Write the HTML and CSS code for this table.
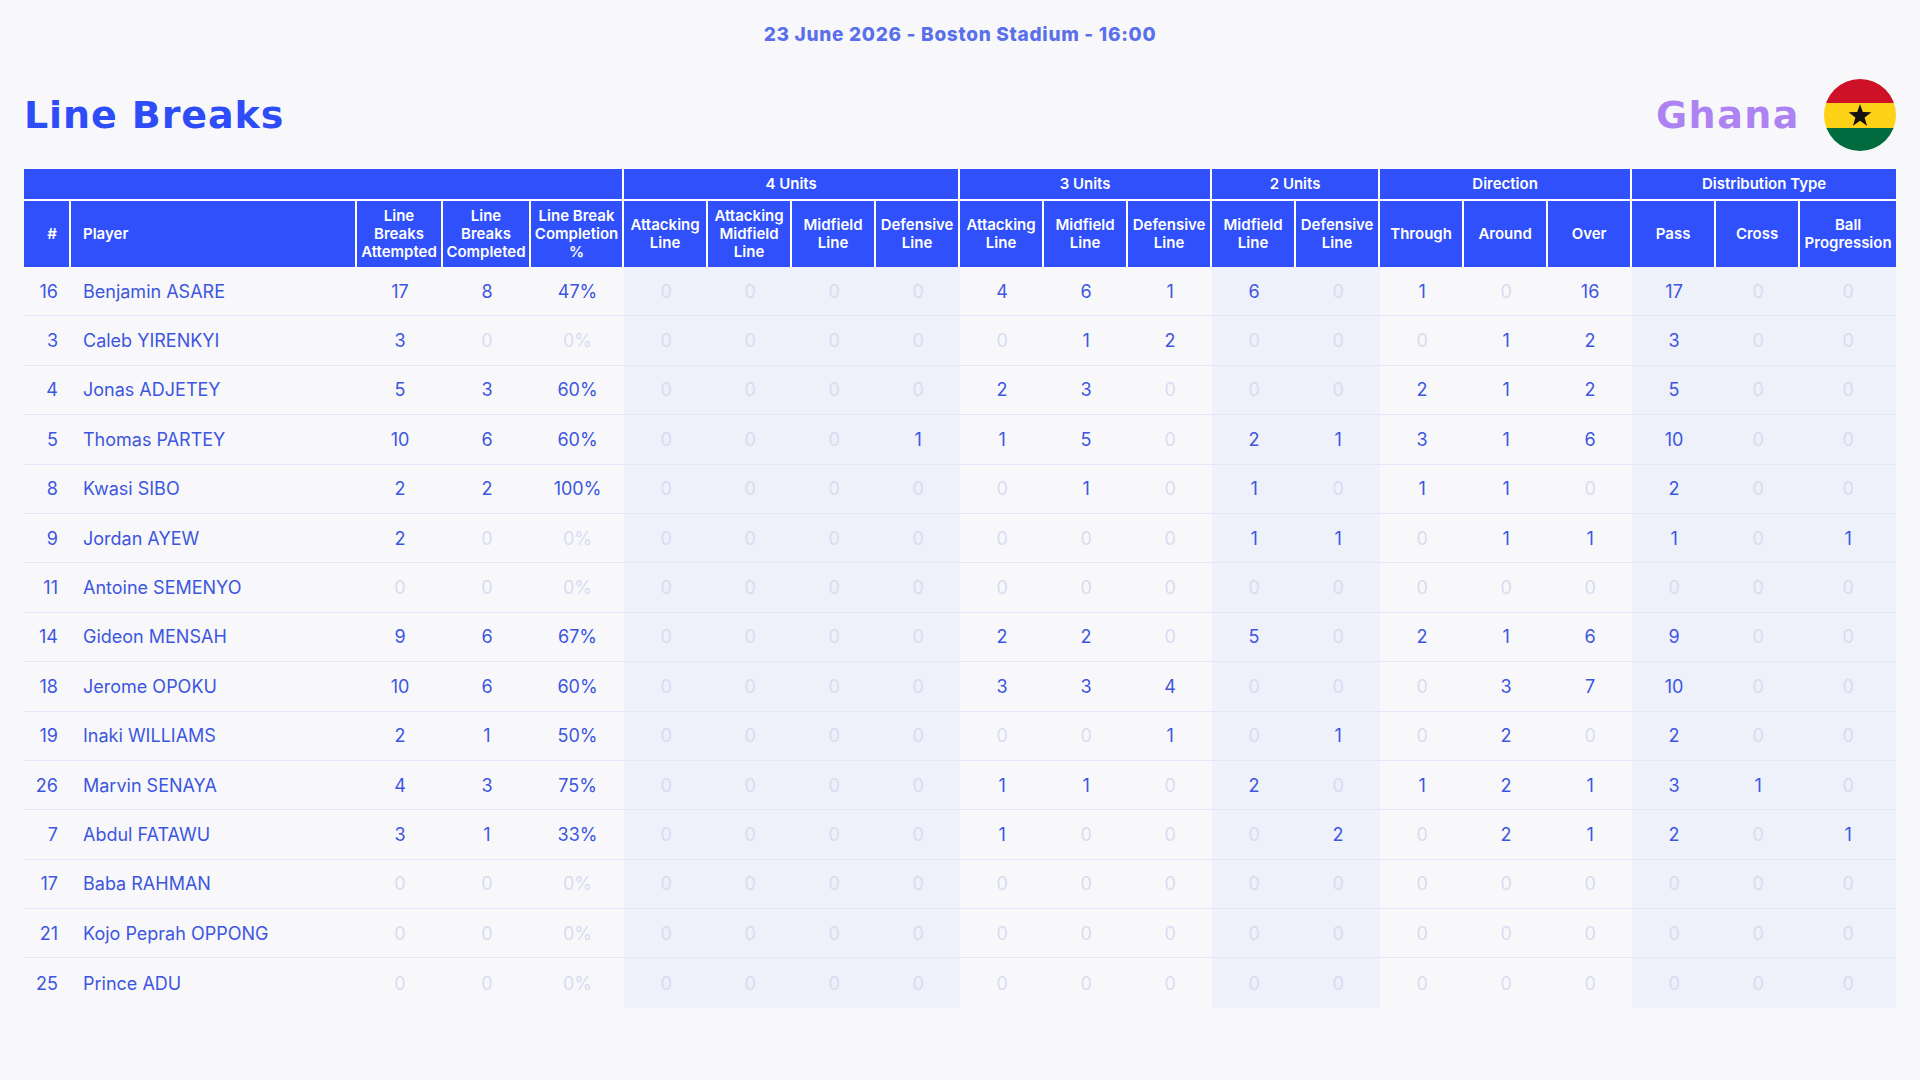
FILE: index.html
```html
<!DOCTYPE html>
<html lang="en">
<head>
<meta charset="utf-8">
<title>Line Breaks - Ghana</title>
<link rel="stylesheet" href="styles.css">
</head>
<body>
<div class="page">
  <div class="date">23 June 2026 - Boston Stadium - 16:00</div>
  <div class="top">
    <h1 class="title">Line Breaks</h1>
    <div class="team">
      <span class="team-name">Ghana</span>
      <svg class="flag" width="72" height="72" viewBox="0 0 72 72">
        <defs><clipPath id="c"><circle cx="36" cy="36" r="36"/></clipPath></defs>
        <g clip-path="url(#c)">
          <rect x="0" y="0" width="72" height="24" fill="#ce1126"/>
          <rect x="0" y="24" width="72" height="25" fill="#fcd116"/>
          <rect x="0" y="49" width="72" height="23" fill="#006b3f"/>
        </g>
        <polygon fill="#111" points="36,25 38.82,33.12 47.41,33.29 40.57,38.48 43.05,46.71 36,41.8 28.95,46.71 31.43,38.48 24.59,33.29 33.18,33.12"/>
      </svg>
    </div>
  </div>
  <table class="stats">
    <colgroup>
      <col class="c-num"><col class="c-player"><col class="c-att"><col class="c-comp"><col class="c-pct">
      <col class="c-stat tint"><col class="c-stat tint"><col class="c-stat tint"><col class="c-stat tint">
      <col class="c-stat"><col class="c-stat"><col class="c-stat">
      <col class="c-stat tint"><col class="c-stat tint">
      <col class="c-stat"><col class="c-stat"><col class="c-stat">
      <col class="c-stat tint"><col class="c-stat tint"><col class="c-last tint">
    </colgroup>
    <thead>
      <tr class="groups">
        <th colspan="5"></th>
        <th colspan="4">4 Units</th>
        <th colspan="3">3 Units</th>
        <th colspan="2">2 Units</th>
        <th colspan="3">Direction</th>
        <th colspan="3" class="last">Distribution Type</th>
      </tr>
      <tr class="cols">
        <th class="num">#</th>
        <th class="player">Player</th>
        <th>Line<br>Breaks<br>Attempted</th>
        <th>Line<br>Breaks<br>Completed</th>
        <th>Line Break<br>Completion<br>%</th>
        <th>Attacking<br>Line</th>
        <th>Attacking<br>Midfield<br>Line</th>
        <th>Midfield<br>Line</th>
        <th>Defensive<br>Line</th>
        <th>Attacking<br>Line</th>
        <th>Midfield<br>Line</th>
        <th>Defensive<br>Line</th>
        <th>Midfield<br>Line</th>
        <th>Defensive<br>Line</th>
        <th>Through</th>
        <th>Around</th>
        <th>Over</th>
        <th>Pass</th>
        <th>Cross</th>
        <th class="last">Ball<br>Progression</th>
      </tr>
    </thead>
    <tbody>
      <tr><td class="num">16</td><td class="player">Benjamin ASARE</td><td>17</td><td>8</td><td>47%</td><td class="z">0</td><td class="z">0</td><td class="z">0</td><td class="z">0</td><td>4</td><td>6</td><td>1</td><td>6</td><td class="z">0</td><td>1</td><td class="z">0</td><td>16</td><td>17</td><td class="z">0</td><td class="z">0</td></tr>
      <tr><td class="num">3</td><td class="player">Caleb YIRENKYI</td><td>3</td><td class="z">0</td><td class="z">0%</td><td class="z">0</td><td class="z">0</td><td class="z">0</td><td class="z">0</td><td class="z">0</td><td>1</td><td>2</td><td class="z">0</td><td class="z">0</td><td class="z">0</td><td>1</td><td>2</td><td>3</td><td class="z">0</td><td class="z">0</td></tr>
      <tr><td class="num">4</td><td class="player">Jonas ADJETEY</td><td>5</td><td>3</td><td>60%</td><td class="z">0</td><td class="z">0</td><td class="z">0</td><td class="z">0</td><td>2</td><td>3</td><td class="z">0</td><td class="z">0</td><td class="z">0</td><td>2</td><td>1</td><td>2</td><td>5</td><td class="z">0</td><td class="z">0</td></tr>
      <tr><td class="num">5</td><td class="player">Thomas PARTEY</td><td>10</td><td>6</td><td>60%</td><td class="z">0</td><td class="z">0</td><td class="z">0</td><td>1</td><td>1</td><td>5</td><td class="z">0</td><td>2</td><td>1</td><td>3</td><td>1</td><td>6</td><td>10</td><td class="z">0</td><td class="z">0</td></tr>
      <tr><td class="num">8</td><td class="player">Kwasi SIBO</td><td>2</td><td>2</td><td>100%</td><td class="z">0</td><td class="z">0</td><td class="z">0</td><td class="z">0</td><td class="z">0</td><td>1</td><td class="z">0</td><td>1</td><td class="z">0</td><td>1</td><td>1</td><td class="z">0</td><td>2</td><td class="z">0</td><td class="z">0</td></tr>
      <tr><td class="num">9</td><td class="player">Jordan AYEW</td><td>2</td><td class="z">0</td><td class="z">0%</td><td class="z">0</td><td class="z">0</td><td class="z">0</td><td class="z">0</td><td class="z">0</td><td class="z">0</td><td class="z">0</td><td>1</td><td>1</td><td class="z">0</td><td>1</td><td>1</td><td>1</td><td class="z">0</td><td>1</td></tr>
      <tr><td class="num">11</td><td class="player">Antoine SEMENYO</td><td class="z">0</td><td class="z">0</td><td class="z">0%</td><td class="z">0</td><td class="z">0</td><td class="z">0</td><td class="z">0</td><td class="z">0</td><td class="z">0</td><td class="z">0</td><td class="z">0</td><td class="z">0</td><td class="z">0</td><td class="z">0</td><td class="z">0</td><td class="z">0</td><td class="z">0</td><td class="z">0</td></tr>
      <tr><td class="num">14</td><td class="player">Gideon MENSAH</td><td>9</td><td>6</td><td>67%</td><td class="z">0</td><td class="z">0</td><td class="z">0</td><td class="z">0</td><td>2</td><td>2</td><td class="z">0</td><td>5</td><td class="z">0</td><td>2</td><td>1</td><td>6</td><td>9</td><td class="z">0</td><td class="z">0</td></tr>
      <tr><td class="num">18</td><td class="player">Jerome OPOKU</td><td>10</td><td>6</td><td>60%</td><td class="z">0</td><td class="z">0</td><td class="z">0</td><td class="z">0</td><td>3</td><td>3</td><td>4</td><td class="z">0</td><td class="z">0</td><td class="z">0</td><td>3</td><td>7</td><td>10</td><td class="z">0</td><td class="z">0</td></tr>
      <tr><td class="num">19</td><td class="player">Inaki WILLIAMS</td><td>2</td><td>1</td><td>50%</td><td class="z">0</td><td class="z">0</td><td class="z">0</td><td class="z">0</td><td class="z">0</td><td class="z">0</td><td>1</td><td class="z">0</td><td>1</td><td class="z">0</td><td>2</td><td class="z">0</td><td>2</td><td class="z">0</td><td class="z">0</td></tr>
      <tr><td class="num">26</td><td class="player">Marvin SENAYA</td><td>4</td><td>3</td><td>75%</td><td class="z">0</td><td class="z">0</td><td class="z">0</td><td class="z">0</td><td>1</td><td>1</td><td class="z">0</td><td>2</td><td class="z">0</td><td>1</td><td>2</td><td>1</td><td>3</td><td>1</td><td class="z">0</td></tr>
      <tr><td class="num">7</td><td class="player">Abdul FATAWU</td><td>3</td><td>1</td><td>33%</td><td class="z">0</td><td class="z">0</td><td class="z">0</td><td class="z">0</td><td>1</td><td class="z">0</td><td class="z">0</td><td class="z">0</td><td>2</td><td class="z">0</td><td>2</td><td>1</td><td>2</td><td class="z">0</td><td>1</td></tr>
      <tr><td class="num">17</td><td class="player">Baba RAHMAN</td><td class="z">0</td><td class="z">0</td><td class="z">0%</td><td class="z">0</td><td class="z">0</td><td class="z">0</td><td class="z">0</td><td class="z">0</td><td class="z">0</td><td class="z">0</td><td class="z">0</td><td class="z">0</td><td class="z">0</td><td class="z">0</td><td class="z">0</td><td class="z">0</td><td class="z">0</td><td class="z">0</td></tr>
      <tr><td class="num">21</td><td class="player">Kojo Peprah OPPONG</td><td class="z">0</td><td class="z">0</td><td class="z">0%</td><td class="z">0</td><td class="z">0</td><td class="z">0</td><td class="z">0</td><td class="z">0</td><td class="z">0</td><td class="z">0</td><td class="z">0</td><td class="z">0</td><td class="z">0</td><td class="z">0</td><td class="z">0</td><td class="z">0</td><td class="z">0</td><td class="z">0</td></tr>
      <tr><td class="num">25</td><td class="player">Prince ADU</td><td class="z">0</td><td class="z">0</td><td class="z">0%</td><td class="z">0</td><td class="z">0</td><td class="z">0</td><td class="z">0</td><td class="z">0</td><td class="z">0</td><td class="z">0</td><td class="z">0</td><td class="z">0</td><td class="z">0</td><td class="z">0</td><td class="z">0</td><td class="z">0</td><td class="z">0</td><td class="z">0</td></tr>
    </tbody>
  </table>
</div>
</body>
</html>
```

FILE: styles.css
```css
html, body {
  margin: 0;
  padding: 0;
  background: #f8f8fa;
}
body {
  font-family: Inter, "Noto Sans", "Liberation Sans", sans-serif;
  color: #3d56df;
}
.page {
  padding: 22px 24px 0;
}
.date {
  text-align: center;
  font-family: Inter, "Liberation Sans", sans-serif;
  font-weight: 800;
  font-size: 19px;
  line-height: 26px;
  letter-spacing: 0.7px;
  color: #5a70ea;
}
.top {
  display: flex;
  justify-content: space-between;
  align-items: center;
  height: 72px;
  margin-top: 31px;
}
.title {
  margin: 0;
  font-family: "DejaVu Sans", "Liberation Sans", sans-serif;
  font-weight: 700;
  font-size: 38px;
  letter-spacing: 0.9px;
  color: #2e4cf7;
  line-height: 1;
}
.team {
  display: flex;
  align-items: center;
  gap: 24px;
}
.team-name {
  font-family: "DejaVu Sans", "Liberation Sans", sans-serif;
  font-weight: 700;
  font-size: 38px;
  letter-spacing: 1.5px;
  color: #ad82f2;
  line-height: 1;
}
.flag {
  display: block;
}
.stats {
  margin-top: 18px;
  width: 1872px;
  table-layout: fixed;
  border-collapse: separate;
  border-spacing: 0;
}
.c-num { width: 47px; }
.c-player { width: 286px; }
.c-att { width: 86px; }
.c-comp { width: 88px; }
.c-pct { width: 93px; }
.c-stat { width: 84px; }
.c-last { width: 96px; }
col.tint { background: #eef0fa; }

.stats th {
  background: #3050fc;
  color: #ffffff;
  font-weight: 600;
  font-size: 15px;
  line-height: 18px;
  text-align: center;
  padding: 0 2px;
  border-right: 2px solid #ffffff;
  vertical-align: middle;
}
.stats th.last { border-right: 0; }
.stats tr.groups { height: 32px; }
.stats tr.groups th {
  border-bottom: 2px solid #ffffff;
  height: 32px;
  box-sizing: border-box;
}
.stats tr.cols { height: 66px; }
.stats th.num {
  text-align: right;
  padding-right: 12px;
}
.stats th.player {
  text-align: left;
  padding-left: 12px;
}
.stats tbody tr { height: 49.4px; }
.stats td {
  font-size: 18px;
  font-weight: 400;
  color: #3d56df;
  text-align: center;
  vertical-align: middle;
  padding: 0;
  border-bottom: 1.5px solid #e3e6f6;
  box-sizing: border-box;
}
.stats tbody tr:last-child td { border-bottom: 0; }
.stats td.num {
  text-align: right;
  padding-right: 13px;
}
.stats td.player {
  text-align: left;
  padding-left: 12px;
}
.stats td.z {
  color: #d8dcf2;
}
```
